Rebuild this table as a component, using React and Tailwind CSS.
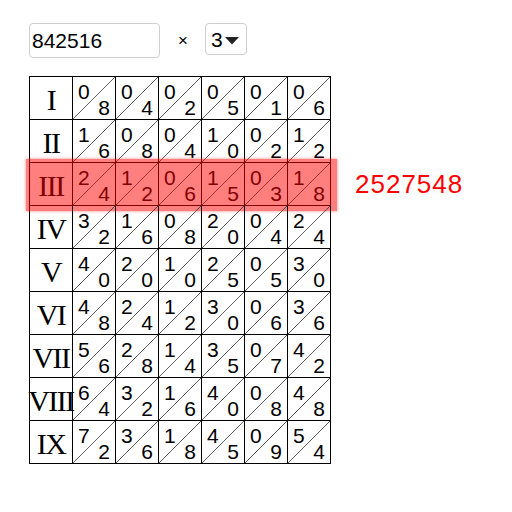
import { useState } from 'react';

const ROMAN = ['I', 'II', 'III', 'IV', 'V', 'VI', 'VII', 'VIII', 'IX'];

// one bone cell: tens top-left, units bottom-right, diagonal between
function BoneCell({ value }) {
  const tens = Math.floor(value / 10);
  const units = value % 10;
  return (
    <div className="relative w-[43px] h-[43px] border-r border-b border-black">
      <svg className="absolute inset-0" width="42" height="42" viewBox="0 0 42 42">
        <line x1="0" y1="42" x2="42" y2="0" stroke="#333" strokeWidth="0.8" />
      </svg>
      <span className="absolute top-[4px] left-[5px] text-[21px] leading-none text-black">{tens}</span>
      <span className="absolute bottom-[1px] right-[5px] text-[21px] leading-none text-black">{units}</span>
    </div>
  );
}

export default function App() {
  const [number, setNumber] = useState('842516');
  const [multiplier, setMultiplier] = useState(3);

  const digits = number.split('').filter((c) => /[0-9]/.test(c)).map(Number);
  const product = (BigInt(number.replace(/\D/g, '') || '0') * BigInt(multiplier)).toString();

  return (
    <div className="pl-[29px] pt-[23px] bg-white min-h-[512px]" style={{ fontFamily: '"Liberation Sans", Arial, sans-serif' }}>
      <div className="flex items-start">
        <input
          value={number}
          onChange={(e) => setNumber(e.target.value)}
          className="w-[131px] h-[35px] border border-[#cfcfcf] rounded-[4px] pl-[2px] text-[21px] text-black outline-none"
        />
        <span className="ml-[18px] mt-[9px] text-[17px] leading-none text-black">×</span>
        <div className="ml-[17px] w-[42px] h-[32px] border border-[#cfcfcf] rounded-[4px] flex items-center pl-[5px] relative">
          <select
            value={multiplier}
            onChange={(e) => setMultiplier(Number(e.target.value))}
            className="appearance-none bg-transparent outline-none text-[21px] leading-none text-black w-[36px] pr-[14px]"
          >
            {[1, 2, 3, 4, 5, 6, 7, 8, 9].map((n) => (
              <option key={n} value={n}>{n}</option>
            ))}
          </select>
          <svg className="absolute left-[19px] top-[13px] pointer-events-none" width="14" height="8" viewBox="0 0 14 8">
            <polygon points="0,0 14,0 7,7.5" fill="#222" />
          </svg>
        </div>
      </div>

      <div className="flex items-start mt-[18px]">
        <div className="border-l border-t border-black w-max">
          {ROMAN.map((r, i) => (
            <div key={r} className="flex relative">
              <div
                className="w-[43px] h-[43px] border-r border-b border-black flex items-center justify-center pt-[2px] text-[30px] text-black whitespace-nowrap"
                style={{ fontFamily: '"Liberation Serif", "Times New Roman", serif' }}
              >
                <span className="tracking-[-1.5px]">{r}</span>
              </div>
              {digits.map((d, j) => (
                <BoneCell key={j} value={d * (i + 1)} />
              ))}
              {i + 1 === multiplier && (
                <div className="absolute -left-[4px] -right-[6px] -top-[4px] -bottom-[5px] bg-[rgba(255,0,0,0.5)] shadow-[0_0_3px_rgba(255,0,0,0.5)] pointer-events-none" />
              )}
            </div>
          ))}
        </div>
        <div
          className="ml-[24px] h-[43px] flex items-center text-[26px] tracking-[1px] text-[#ff0000]"
          style={{ marginTop: `${(multiplier - 1) * 43 + 1}px` }}
        >
          {product}
        </div>
      </div>
    </div>
  );
}
